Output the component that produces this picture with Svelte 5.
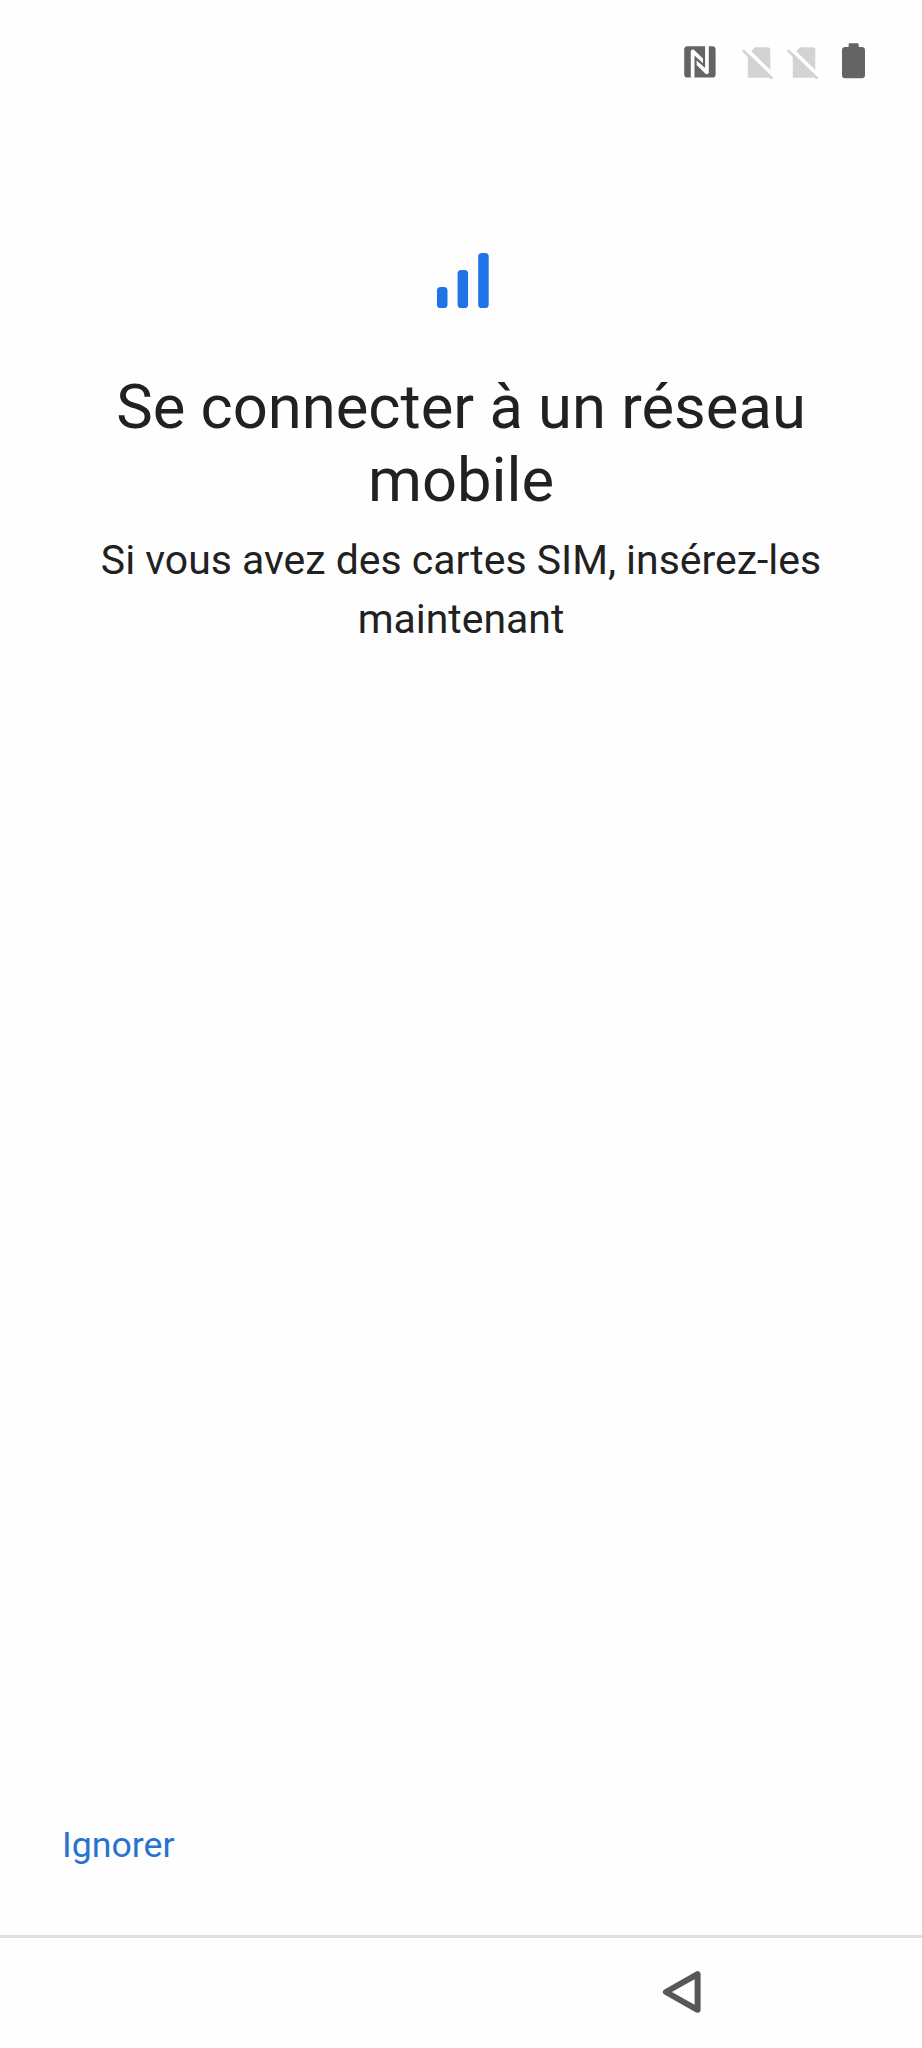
<script lang="ts">
  // Empty SIM slots shown in the status bar
  const simSlots = [1, 2];

  // Mobile signal bars, from weakest to strongest
  const bars = [
    { x: 0, height: 21 },
    { x: 20.6, height: 38 },
    { x: 41.2, height: 55 }
  ];
</script>

<div class="screen">
  <header class="status-bar">
    <svg class="nfc" width="32" height="32" viewBox="0 0 32 32">
      <rect x="0.2" y="0.2" width="31.4" height="31.4" rx="3.4" fill="#646464" />
      <path d="M6.8 31.8V4.4L9.3 3.2L19 12.6V17.2L10.5 9.5V31.8Z" fill="#fff" />
      <path d="M24.8 0V27.2L22.3 28.4L12.6 19V14.4L21.1 22.1V0Z" fill="#fff" />
    </svg>
    <div class="sims">
      {#each simSlots as slot (slot)}
        <svg width="32" height="32" viewBox="0 0 32 32">
          <path d="M14 1.2H26.8Q29.3 1.2 29.3 3.7V31.8H6.8V9Z" fill="#d3d3d3" />
          <path d="M3.6 1.4L33.6 30.8" stroke="#fff" stroke-width="3.8" />
          <path d="M1.8 4.2L31.4 32.6" stroke="#d3d3d3" stroke-width="2.6" />
        </svg>
      {/each}
    </div>
    <svg class="battery" width="24" height="36" viewBox="0 0 24 36">
      <path
        d="M6.6 4V1.4Q6.6 0.3 7.7 0.3H15.6Q16.7 0.3 16.7 1.4V4H19.8Q23 4 23 7.2V32Q23 35.2 19.8 35.2H3.2Q0 35.2 0 32V7.2Q0 4 3.2 4Z"
        fill="#646464"
      />
    </svg>
  </header>

  <main>
    <svg class="signal" width="52" height="55" viewBox="0 0 52 55">
      {#each bars as bar}
        <rect x={bar.x} y={55 - bar.height} width="10.5" height={bar.height} rx="3.6" fill="#1f73e6" />
      {/each}
    </svg>
    <h1>Se connecter à un réseau mobile</h1>
    <p>Si vous avez des cartes SIM, insérez-les maintenant</p>
  </main>

  <footer>
    <button class="skip">Ignorer</button>
  </footer>

  <nav>
    <button class="back" aria-label="Retour">
      <svg width="40" height="44" viewBox="0 0 40 44">
        <path d="M3.9 22L35.6 4.2V39.8Z" fill="none" stroke="#575757" stroke-width="6" stroke-linejoin="round" />
      </svg>
    </button>
  </nav>
</div>

<style>
  :global(body) {
    margin: 0;
    background: #fefefe;
  }

  .screen {
    display: flex;
    flex-direction: column;
    width: 922px;
    height: 2048px;
    overflow: hidden;
    background: #fefefe;
    color: #212121;
    font-family: Roboto, sans-serif;
  }

  svg {
    display: block;
    flex: none;
    overflow: visible;
  }

  .status-bar {
    display: flex;
    justify-content: flex-end;
    align-items: flex-start;
    box-sizing: border-box;
    height: 124px;
    padding: 43px 56px 0 0;
  }

  .nfc {
    margin: 3px 25px 0 0;
  }

  .sims {
    display: flex;
    gap: 13px;
    margin: 3px 24px 0 0;
  }

  main {
    flex: 1;
    display: flex;
    flex-direction: column;
    align-items: center;
    padding: 129px 64px 0;
    text-align: center;
  }

  .signal {
    margin-left: 4px;
  }

  h1 {
    margin: 63px 0 0;
    font-size: 61.5px;
    font-weight: 400;
    line-height: 73px;
  }

  p {
    margin: 14px 0 0;
    font-size: 40.95px;
    line-height: 59px;
  }

  footer {
    box-sizing: border-box;
    height: 111px;
    padding-left: 62px;
  }

  button {
    display: block;
    padding: 0;
    border: 0;
    background: none;
    font-family: inherit;
  }

  .skip {
    color: #2a72cf;
    font-size: 35.7px;
    line-height: 42px;
  }

  nav {
    display: flex;
    justify-content: flex-end;
    align-items: flex-start;
    box-sizing: border-box;
    height: 113px;
    padding: 32px 220px 0 0;
    border-top: 3px solid #dfdfdf;
  }
</style>
